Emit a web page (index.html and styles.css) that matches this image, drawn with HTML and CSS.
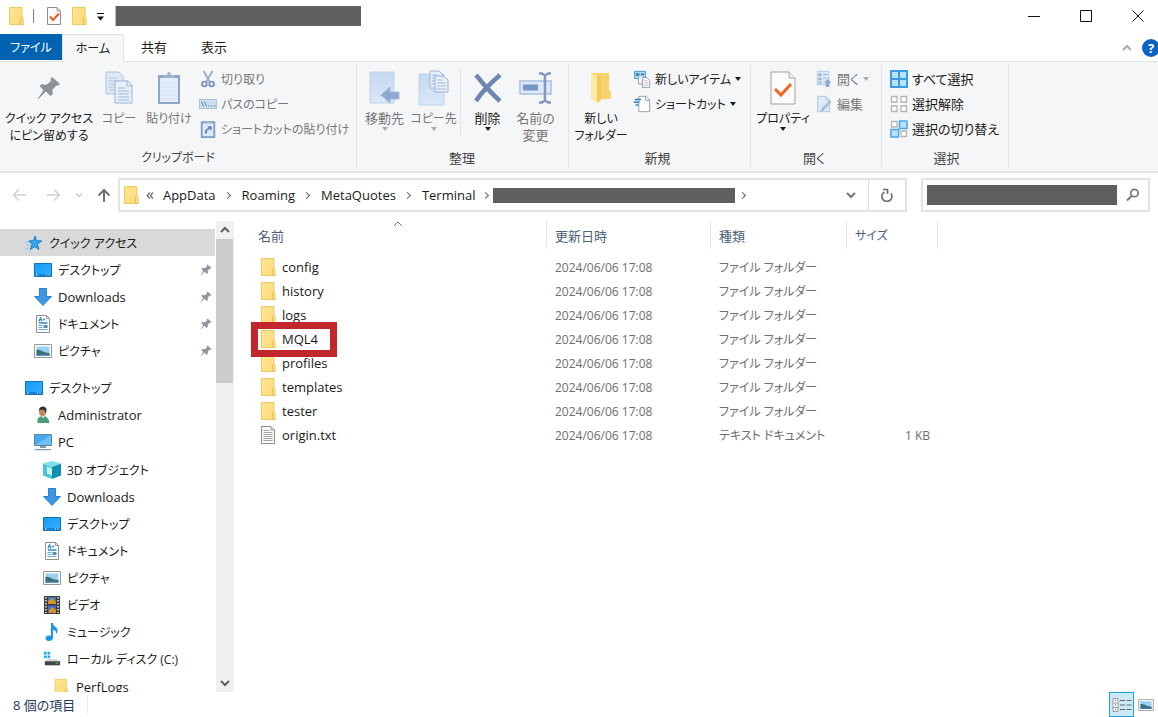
FILE: index.html
```html
<!DOCTYPE html>
<html lang="ja">
<head>
<meta charset="utf-8">
<title>エクスプローラー</title>
<link rel="stylesheet" href="styles.css">
</head>
<body>
<svg class="sprite" aria-hidden="true">
  <defs>
    <linearGradient id="g-folder" x1="0" y1="0" x2="1" y2="1"><stop offset="0" stop-color="#ffe694"/><stop offset="1" stop-color="#ffd977"/></linearGradient>
    <linearGradient id="g-desk" x1="0" y1="0" x2="1" y2="1"><stop offset="0" stop-color="#1a9bf5"/><stop offset="1" stop-color="#2fb0ff"/></linearGradient>
    <linearGradient id="g-pale" x1="0" y1="0" x2="0" y2="1"><stop offset="0" stop-color="#c5d8f0"/><stop offset="1" stop-color="#dbe8f8"/></linearGradient>
  </defs>
  <symbol id="folder" viewBox="0 0 16 20"><path d="M1.500 1.500h12.500v17H1.500z" fill="url(#g-folder)" stroke="#efcb5d"/><path d="M12.500 18.500v-6l1-1.500 1.500 1.500v6z" fill="#ffe591" stroke="#e6bd45"/></symbol>
  <symbol id="doccheck" viewBox="0 0 16 20"><path d="M1.500 1.500h9.500l3.500 3.500v13.500h-13z" fill="#fafafa" stroke="#8d8d8d"/><path d="M11 1.500v3.500h3.500" fill="none" stroke="#9b9b9b"/><path d="M4 10.500l3 3.500 6-6.500" fill="none" stroke="#f0582a" stroke-width="2"/></symbol>
  <symbol id="chev-d" viewBox="0 0 10 8"><path d="M1 2l4 4 4-4" fill="none" stroke="currentColor" stroke-width="2"/></symbol>
  <symbol id="chev-u" viewBox="0 0 10 8"><path d="M1 6l4-4 4 4" fill="none" stroke="currentColor" stroke-width="2"/></symbol>
  <symbol id="tri" viewBox="0 0 6 4"><path d="M0 0h6L3 4z" fill="currentColor"/></symbol>
  <symbol id="pin" viewBox="0 0 24 24"><path d="M15 1l8 7-2 1.500-2 .2-3.500 4 .2 4.300-2 2-5-4.500L1.500 23 1 22.500 6.500 14 2.500 10l2-1.800 5 .5L14 5l-.5-2z" fill="currentColor"/></symbol>
  <symbol id="copy" viewBox="0 0 28 34"><path d="M1 1h13l4 4v18H1z" fill="#dce8f6" stroke="#aec3df"/><path d="M4 7h8M4 10h11M4 13h11M4 16h8M4 19h8" stroke="#adc4e2"/><path d="M10 10h13l4 4v18H10z" fill="#e7f0fa" stroke="#9db5d5"/><path d="M22 10v5h5" fill="none" stroke="#9db5d5"/><path d="M13 17h7M13 20h11M13 23h11M13 26h11M13 29h11" stroke="#9cb7da"/></symbol>
  <symbol id="paste" viewBox="0 0 24 34"><path d="M1 4h22v29H1z" fill="#8fa6cb"/><path d="M3 7h18v24H3z" fill="#e2edf9"/><path d="M3 12h18M3 16h18M3 20h18M3 24h18M3 28h18" stroke="#d0dff2"/><path d="M6 7V4h4c0-4 4-4 4 0h4v3z" fill="#a3b3cd"/></symbol>
  <symbol id="cut" viewBox="0 0 16 20"><path d="M3 1l7 12M13 1L6 13" stroke="#96a8c6" stroke-width="2" fill="none"/><circle cx="4" cy="15.500" r="2.600" fill="none" stroke="#7891bc" stroke-width="2"/><circle cx="12" cy="15.500" r="2.600" fill="none" stroke="#7891bc" stroke-width="2"/></symbol>
  <symbol id="path" viewBox="0 0 18 12"><path d="M.5 1.500h17v9H.5z" fill="#cfe0f3" stroke="#a9c0df"/><path d="M2.500 3.500l2 5M5.500 3.500l2 5" stroke="#5f7ca9"/><path d="M9 8h1.500M12 8h1.500M15 8h1.500" stroke="#5f7ca9"/></symbol>
  <symbol id="pastelink" viewBox="0 0 16 20"><path d="M1 2.500h14V19H1z" fill="#dce9f8" stroke="#7f9bc6" stroke-width="2"/><path d="M5 4V1.500h6V4z" fill="#a8b9d3"/><path d="M5.500 15c0-4 1-5 4-5.500" fill="none" stroke="#5a7db5" stroke-width="2"/><path d="M7 7h5v5z" fill="#5a7db5"/></symbol>
  <symbol id="moveto" viewBox="0 0 32 34"><path d="M1 1h24v31H1z" fill="url(#g-pale)" stroke="#c3d2e8"/><path d="M12 24l9-8v5h9v7h-9v4z" fill="#8ea8d0" stroke="#a5badb"/></symbol>
  <symbol id="copyto" viewBox="0 0 32 36"><path d="M1 4h25v31H1z" fill="url(#g-pale)" stroke="#c3d2e8"/><path d="M12 1h9l4 4v13H12z" fill="#e3edf9" stroke="#a1b7d6"/><path d="M17 6h8l5 4v12H17z" fill="#e9f1fb" stroke="#96aed2"/><path d="M19 10h6M19 13h9M19 16h9M19 19h9M14 5h5M14 8h3M14 11h3M14 14h3" stroke="#9cb5d9"/></symbol>
  <symbol id="delete" viewBox="0 0 30 30"><path d="M3 2c4 5 16 19 24 26M27 2C20 8 8 20 3 28" fill="none" stroke="#6e86b0" stroke-width="4.500"/></symbol>
  <symbol id="rename" viewBox="0 0 34 32"><path d="M1 9h31v13H1z" fill="#dce8f7" stroke="#a9bfdf" stroke-width="1.500"/><path d="M4 12.500h15v6H4z" fill="#7894c3"/><path d="M20 1.500h3l3 2 3-2h3M26 3v26M20 30.500h3l3-2 3 2h3" fill="none" stroke="#8199c1" stroke-width="2.500"/></symbol>
  <symbol id="newfolder" viewBox="0 0 22 32"><path d="M1 1h18v17l2 2v7H6z" fill="#f8d36b"/><path d="M1 1l6 3v27l-6-4z" fill="#ffe9a4"/><path d="M7 4h4v24l-4 3z" fill="#f3c959"/></symbol>
  <symbol id="newitem" viewBox="0 0 18 20"><path d="M.8 1.500h12v8H.8z" fill="#a8dcf7" stroke="#4794c3"/><path d="M2 3.500h4v3H2zM8 3.500h3v2H8z" fill="#347b9f"/><path d="M5 6.500h6v9H5z" fill="#eef5fc" stroke="#8b9eae"/><path d="M9.500 8.500h5l3 3v8h-8z" fill="#fff" stroke="#8797aa"/><path d="M11 12h4M11 14.500h5M11 17h5" stroke="#d9a6a6"/></symbol>
  <symbol id="shortcut" viewBox="0 0 18 20"><path d="M5.500 1.500h8l4 4v13h-12z" fill="#fff" stroke="#919ba5"/><path d="M13 1.500v4.500h4.500" fill="none" stroke="#919ba5"/><path d="M1 5h7M0 8h6M2 11h3" stroke="#2f7cc4" stroke-width="1.700"/></symbol>
  <symbol id="props" viewBox="0 0 26 34"><path d="M1 1h18l6 6v26H1z" fill="#fbfbfb" stroke="#a2a2a2"/><path d="M19 1v6h6" fill="#eee" stroke="#aaa"/><path d="M5 18l6 6L21 13" fill="none" stroke="#f26522" stroke-width="3"/></symbol>
  <symbol id="open" viewBox="0 0 16 20"><path d="M.5 1.500h13v15H.5z" fill="#dce8f6" stroke="#b2c6e1"/><path d="M2 4h3v3H2zM2 8.500h3v3H2zM2 13h3v2H2z" fill="#94abd0"/><path d="M7 5h5M7 9h4" stroke="#94abd0"/><path d="M8 14l4-4 4 4h-2v5h-4v-5z" fill="#91a8ce"/></symbol>
  <symbol id="edit" viewBox="0 0 16 20"><path d="M1 1.500h9l4 4V18.500H1z" fill="#dfeaf8" stroke="#abc1df"/><path d="M10 1.500v4h4" fill="none" stroke="#abc1df"/><path d="M14.500 6.500l-8 8-1.500 3 3-1.500 7.500-8z" fill="#b1c6e4" stroke="#8fa9d0"/></symbol>
  <symbol id="selall" viewBox="0 0 18 18"><path d="M1 1h16v16H1zM9 1v16M1 9h16" fill="#b9e2fc" stroke="#3b9ce5" stroke-width="2"/></symbol>
  <symbol id="selnone" viewBox="0 0 18 18"><path d="M1.500 1.500h5.500v5.500h-5.500zM11 1.500h5.500v5.500h-5.500zM1.500 11h5.500v5.500h-5.500zM11 11h5.500v5.500h-5.500z" fill="#fff" stroke="#b5b5b5" stroke-width="1.300"/></symbol>
  <symbol id="selinv" viewBox="0 0 18 18"><path d="M1.500 1.500h5.500v5.500h-5.500zM11 11h5.500v5.500h-5.500z" fill="#fff" stroke="#b5b5b5" stroke-width="1.300"/><path d="M9.500 1h7.500v7.500H9.500zM1 9.500h7.500V17H1z" fill="#b9e2fc" stroke="#4aa6ea" stroke-width="1.500"/></symbol>
  <symbol id="star" viewBox="0 0 18 18"><path d="M10 2l1.600 4.700 5.200.2-4.200 3.400 1.400 5.200-4.200-2.900-4.600 2.900 1.800-5.200-3.200-3.400 4.700-.2z" fill="#35a4ec" stroke="#1f7fc9"/><path d="M.5 8h3M1.500 11h4M.5 15h3" stroke="#7dc3f1"/></symbol>
  <symbol id="desktop" viewBox="0 0 18 18"><path d="M.5 2.500h17v13H.5z" fill="url(#g-desk)" stroke="#0b73c4"/><path d="M1 14h16" stroke="#0a5da5"/><path d="M2 14h1.500M12 14h1M14.500 14h1" stroke="#fff"/></symbol>
  <symbol id="down" viewBox="0 0 18 18"><path d="M5.500.500h7v8h5l-8.500 9-8.500-9h5z" fill="#3c97e4" stroke="#2c82cf"/></symbol>
  <symbol id="doc" viewBox="0 0 18 18"><path d="M2.500.500h10l3 3v14h-13z" fill="#fff" stroke="#8f8f8f"/><path d="M12.500.500v3h3" fill="none" stroke="#999"/><path d="M5 6.500l1.500-3.500L8 6.500M9 4.500h2M5 8h8.500" fill="none" stroke="#2e8bc9" stroke-width="1.300"/><path d="M4.500 10.500h4M4.500 12.500h4M4.500 14.500h9" stroke="#69a9d6"/><path d="M9.500 10h4v3h-4z" fill="#5a8fa8"/></symbol>
  <symbol id="pic" viewBox="0 0 18 14"><path d="M.5.500h17v13H.5z" fill="#fff" stroke="#979797"/><path d="M2.500 2.500h13v9h-13z" fill="#9bd0f5"/><path d="M2.500 6c4-1 6 3 13 3v2.500h-13z" fill="#3a6f77"/><path d="M2.500 10h13v1.500h-13z" fill="#3f79a8"/></symbol>
  <symbol id="user" viewBox="0 0 16 20"><path d="M2 19c-1-5 1-7 5-8 5 0 8 3 8 8z" fill="#4a9f78"/><path d="M6 10l2 4 2-4z" fill="#f1ede3"/><ellipse cx="7.500" cy="6" rx="4" ry="5" fill="#b98a67"/><path d="M3.500 5c0-6 9-6 8.500 0l-1 3-1-3-3-1z" fill="#3b322d"/></symbol>
  <symbol id="pc" viewBox="0 0 18 18"><path d="M.5 1.500h17v11H.5z" fill="#45a9ef" stroke="#5d86a3"/><path d="M1 12L17 2v10z" fill="#6cc2f8"/><path d="M6 13h6v2H6zM1 16h16v1.300H1z" fill="#7f9cb1"/></symbol>
  <symbol id="cube" viewBox="0 0 18 18"><path d="M9 0l9 2.500-9 3.500-9-3.500z" fill="#7fe0ea"/><path d="M0 2.500L9 6v12l-9-3.500z" fill="#4cc4d6"/><path d="M18 2.500L9 6v12l9-3.500z" fill="#0f8fae"/><path d="M4 5.500l5 2v7l-5-2z" fill="#c9f1f3"/></symbol>
  <symbol id="video" viewBox="0 0 18 18"><path d="M1 0h16v18H1z" fill="#3b3b3b"/><path d="M5 1h8v7H5z" fill="#3979b8"/><path d="M5 9.500h8V17H5z" fill="#3b6ccc"/><path d="M5 5l4-3 4 4v2H5zM6 14l3-3 4 3v3H6z" fill="#d5952b"/><path d="M3 1v16M15 1v16" stroke="#eee" stroke-dasharray="1.500 1.500" stroke-width="1.500"/></symbol>
  <symbol id="music" viewBox="0 0 18 18"><path d="M8 0h2c0 4 5 4 4.500 8-.2 2-1.500 3-1.500 3 .5-4-2-4-3-4v7.500c0 4.500-7.500 4.500-7.500 1C2.500 12.500 6 12 8 13z" fill="#1b95e8"/></symbol>
  <symbol id="disk" viewBox="0 0 20 18"><path d="M1 1h3v3H1zM5 1h3v3H5zM1 5h3v3H1zM5 5h3v3H5z" fill="#19afe8"/><path d="M5 9h10l4 3H2z" fill="#d4d4d4"/><path d="M2 11.500h17V16H2z" fill="#404449"/><path d="M14 13.500h3" stroke="#62dc72"/></symbol>
  <symbol id="text" viewBox="0 0 16 20"><path d="M1.500 1.500h9.500l3.500 3.500v13.500h-13z" fill="#fafafa" stroke="#8f8f8f"/><path d="M11 1.500v3.500h3.500" fill="none" stroke="#999"/><path d="M3.500 5.500h6M3.500 7.500h9M3.500 9.500h9M3.500 11.500h9M3.500 13.500h9M3.500 15.500h9" stroke="#a5a5a5"/></symbol>
  <symbol id="details" viewBox="0 0 20 14"><path d="M1 .5h5v13H1zM1 5h5M1 9.500h5" fill="#fff" stroke="#999"/><path d="M3 2.500h1M3 7h1" stroke="#456"/><path d="M3 11.500h1" stroke="#e22"/><path d="M8 2.500h5M14.500 2.500h5M8 7h5M14.500 7h5M8 11.500h5M14.500 11.500h5" stroke="#666"/></symbol>
</svg>

<div class="window">
  <header class="titlebar">
    <svg class="i16"><use href="#folder"/></svg>
    <span class="tsep"></span>
    <button class="plain" aria-label="プロパティ"><svg class="i16"><use href="#doccheck"/></svg></button>
    <button class="plain" aria-label="新しいフォルダー"><svg class="i16"><use href="#folder"/></svg></button>
    <button class="plain custom" aria-label="カスタマイズ"><svg width="9" height="8" viewBox="0 0 9 8"><path d="M1 .5h7" stroke="#111"/><path d="M1 3.500h7L4.500 7.500z" fill="#111"/></svg></button>
    <span class="title-mask"></span>
    <div class="winbtns">
      <button class="plain" aria-label="最小化"><svg width="12" height="12" viewBox="0 0 12 12"><path d="M0 6.500h12" stroke="#111"/></svg></button>
      <button class="plain" aria-label="最大化"><svg width="12" height="12" viewBox="0 0 12 12"><path d="M.5.500h11v11H.5z" fill="none" stroke="#111"/></svg></button>
      <button class="plain" aria-label="閉じる"><svg width="12" height="12" viewBox="0 0 12 12"><path d="M.5.500l11 11M11.500.500l-11 11" stroke="#111"/></svg></button>
    </div>
  </header>

  <nav class="tabs">
    <button class="tab file kana">ファイル</button>
    <button class="tab active kana">ホーム</button>
    <button class="tab">共有</button>
    <button class="tab">表示</button>
    <div class="tab-end">
      <button class="plain collapse" aria-label="リボンの最小化"><svg width="10" height="8"><use href="#chev-u"/></svg></button>
      <button class="help" aria-label="ヘルプ">?</button>
    </div>
  </nav>

  <section class="ribbon">
    <div class="group g-clip">
      <div class="tools">
        <button class="big b-pin kana"><span class="ico pin"><svg width="24" height="24"><use href="#pin"/></svg></span>クイック アクセス<br>にピン留めする</button>
        <button class="big b-copy dim kana"><span class="ico"><svg width="28" height="34"><use href="#copy"/></svg></span>コピー</button>
        <button class="big b-paste dim kana"><span class="ico"><svg width="24" height="34"><use href="#paste"/></svg></span>貼り付け</button>
        <div class="smalls">
          <button class="small dim kana"><svg class="i18"><use href="#cut"/></svg>切り取り</button>
          <button class="small dim kana"><svg class="i18"><use href="#path"/></svg>パスのコピー</button>
          <button class="small dim kana"><svg class="i18"><use href="#pastelink"/></svg>ショートカットの貼り付け</button>
        </div>
      </div>
      <div class="label kana">クリップボード</div>
    </div>
    <div class="group g-org">
      <div class="tools">
        <button class="big b-org dim"><span class="ico"><svg width="32" height="34"><use href="#moveto"/></svg></span>移動先<svg class="tri"><use href="#tri"/></svg></button>
        <button class="big b-org dim kana"><span class="ico"><svg width="32" height="36"><use href="#copyto"/></svg></span>コピー先<svg class="tri"><use href="#tri"/></svg></button>
        <span class="rsep"></span>
        <button class="big b-org"><span class="ico"><svg width="30" height="30"><use href="#delete"/></svg></span>削除<svg class="tri"><use href="#tri"/></svg></button>
        <button class="big b-ren dim"><span class="ico"><svg width="34" height="32"><use href="#rename"/></svg></span>名前の<br>変更</button>
      </div>
      <div class="label">整理</div>
    </div>
    <div class="group g-new">
      <div class="tools">
        <button class="big b-new kana"><span class="ico"><svg width="22" height="32"><use href="#newfolder"/></svg></span>新しい<br>フォルダー</button>
        <div class="smalls">
          <button class="small kana"><svg class="i18"><use href="#newitem"/></svg>新しいアイテム<svg class="tri"><use href="#tri"/></svg></button>
          <button class="small kana"><svg class="i18"><use href="#shortcut"/></svg>ショートカット<svg class="tri"><use href="#tri"/></svg></button>
        </div>
      </div>
      <div class="label">新規</div>
    </div>
    <div class="group g-open">
      <div class="tools">
        <button class="big b-new kana"><span class="ico"><svg width="26" height="34"><use href="#props"/></svg></span>プロパティ<svg class="tri"><use href="#tri"/></svg></button>
        <div class="smalls">
          <button class="small dim"><svg class="i18"><use href="#open"/></svg>開く<svg class="tri"><use href="#tri"/></svg></button>
          <button class="small dim"><svg class="i18"><use href="#edit"/></svg>編集</button>
        </div>
      </div>
      <div class="label">開く</div>
    </div>
    <div class="group g-sel">
      <div class="tools">
        <div class="smalls">
          <button class="small"><svg class="i18"><use href="#selall"/></svg>すべて選択</button>
          <button class="small"><svg class="i18"><use href="#selnone"/></svg>選択解除</button>
          <button class="small"><svg class="i18"><use href="#selinv"/></svg>選択の切り替え</button>
        </div>
      </div>
      <div class="label">選択</div>
    </div>
  </section>

  <div class="navbar">
    <div class="history">
      <button class="plain" aria-label="戻る"><svg width="14" height="14" viewBox="0 0 14 14"><path d="M14 7H1.500M7 1.500L1.500 7 7 12.500" fill="none" stroke="#d0d0d0" stroke-width="1.500"/></svg></button>
      <button class="plain" aria-label="進む"><svg width="14" height="14" viewBox="0 0 14 14"><path d="M0 7h12.500M7 1.500L12.500 7 7 12.500" fill="none" stroke="#d0d0d0" stroke-width="1.500"/></svg></button>
      <button class="plain recent" aria-label="最近の場所"><svg width="8" height="6"><use href="#chev-d"/></svg></button>
      <button class="plain" aria-label="上へ"><svg width="14" height="14" viewBox="0 0 14 14"><path d="M7 14V2M1.500 7.500L7 2l5.500 5.500" fill="none" stroke="#707070" stroke-width="2"/></svg></button>
    </div>
    <div class="address">
      <svg class="i16"><use href="#folder"/></svg>
      <span class="laquo">«</span>
      <button class="crumb">AppData</button><span class="sep"></span>
      <button class="crumb">Roaming</button><span class="sep"></span>
      <button class="crumb">MetaQuotes</button><span class="sep"></span>
      <button class="crumb">Terminal</button><span class="sep tight"></span>
      <span class="path-mask"></span><span class="sep tight"></span>
      <button class="plain drop" aria-label="履歴"><svg width="10" height="8"><use href="#chev-d"/></svg></button>
      <button class="plain reload" aria-label="更新"><svg width="14" height="14" viewBox="0 0 14 14"><path d="M4.500 4A5 5 0 1 0 11 5.500M3 1.500h4.500V6" fill="none" stroke="#707070" stroke-width="1.700"/></svg></button>
    </div>
    <div class="search">
      <input type="search" aria-label="検索">
      <button class="plain" aria-label="検索を実行"><svg width="14" height="14" viewBox="0 0 14 14"><circle cx="8.500" cy="5" r="3.700" fill="none" stroke="#777" stroke-width="1.700"/><path d="M6 7.500L1 12.500" stroke="#777" stroke-width="2"/></svg></button>
    </div>
  </div>

  <main class="content">
    <aside class="side">
      <ul class="tree">
        <li><a href="#" class="node l0 selected kana"><svg class="i18"><use href="#star"/></svg>クイック アクセス</a>
          <ul>
            <li><a href="#" class="node l1 kana"><svg class="i18"><use href="#desktop"/></svg>デスクトップ<svg class="pinned"><use href="#pin"/></svg></a></li>
            <li><a href="#" class="node l1"><svg class="i18"><use href="#down"/></svg>Downloads<svg class="pinned"><use href="#pin"/></svg></a></li>
            <li><a href="#" class="node l1 kana"><svg class="i18"><use href="#doc"/></svg>ドキュメント<svg class="pinned"><use href="#pin"/></svg></a></li>
            <li><a href="#" class="node l1 kana"><svg class="i18"><use href="#pic"/></svg>ピクチャ<svg class="pinned"><use href="#pin"/></svg></a></li>
          </ul>
        </li>
        <li class="root"><a href="#" class="node l0 kana"><svg class="i18"><use href="#desktop"/></svg>デスクトップ</a>
          <ul>
            <li><a href="#" class="node l1"><svg class="i18"><use href="#user"/></svg>Administrator</a></li>
            <li><a href="#" class="node l1"><svg class="i18"><use href="#pc"/></svg>PC</a>
              <ul>
                <li><a href="#" class="node l2 kana"><svg class="i18"><use href="#cube"/></svg>3D オブジェクト</a></li>
                <li><a href="#" class="node l2"><svg class="i18"><use href="#down"/></svg>Downloads</a></li>
                <li><a href="#" class="node l2 kana"><svg class="i18"><use href="#desktop"/></svg>デスクトップ</a></li>
                <li><a href="#" class="node l2 kana"><svg class="i18"><use href="#doc"/></svg>ドキュメント</a></li>
                <li><a href="#" class="node l2 kana"><svg class="i18"><use href="#pic"/></svg>ピクチャ</a></li>
                <li><a href="#" class="node l2 kana"><svg class="i18"><use href="#video"/></svg>ビデオ</a></li>
                <li><a href="#" class="node l2 kana"><svg class="i18"><use href="#music"/></svg>ミュージック</a></li>
                <li><a href="#" class="node l2 kana"><svg class="i18"><use href="#disk"/></svg>ローカル ディスク (C:)</a>
                  <ul>
                    <li><a href="#" class="node l3"><svg class="i18"><use href="#folder"/></svg>PerfLogs</a></li>
                  </ul>
                </li>
              </ul>
            </li>
          </ul>
        </li>
      </ul>
      <div class="scroll">
        <button class="plain" aria-label="上へスクロール"><svg width="10" height="8"><use href="#chev-u"/></svg></button>
        <div class="track"><div class="thumb"></div></div>
        <button class="plain" aria-label="下へスクロール"><svg width="10" height="8"><use href="#chev-d"/></svg></button>
      </div>
    </aside>
    <section class="files">
      <table>
        <thead>
          <tr><th class="c-name">名前<svg class="sort" width="10" height="6" viewBox="0 0 10 6"><path d="M1 5l4-4 4 4" fill="none" stroke="#777"/></svg></th><th class="c-date">更新日時</th><th class="c-type">種類</th><th class="c-size kana">サイズ</th></tr>
        </thead>
        <tbody>
          <tr><td><div class="name"><svg class="i16"><use href="#folder"/></svg>config</div></td><td>2024/06/06 17:08</td><td>ファイル フォルダー</td><td></td></tr>
          <tr><td><div class="name"><svg class="i16"><use href="#folder"/></svg>history</div></td><td>2024/06/06 17:08</td><td>ファイル フォルダー</td><td></td></tr>
          <tr><td><div class="name"><svg class="i16"><use href="#folder"/></svg>logs</div></td><td>2024/06/06 17:08</td><td>ファイル フォルダー</td><td></td></tr>
          <tr><td><div class="name"><svg class="i16"><use href="#folder"/></svg>MQL4<span class="marker"></span></div></td><td>2024/06/06 17:08</td><td>ファイル フォルダー</td><td></td></tr>
          <tr><td><div class="name"><svg class="i16"><use href="#folder"/></svg>profiles</div></td><td>2024/06/06 17:08</td><td>ファイル フォルダー</td><td></td></tr>
          <tr><td><div class="name"><svg class="i16"><use href="#folder"/></svg>templates</div></td><td>2024/06/06 17:08</td><td>ファイル フォルダー</td><td></td></tr>
          <tr><td><div class="name"><svg class="i16"><use href="#folder"/></svg>tester</div></td><td>2024/06/06 17:08</td><td>ファイル フォルダー</td><td></td></tr>
          <tr><td><div class="name"><svg class="i16"><use href="#text"/></svg>origin.txt</div></td><td>2024/06/06 17:08</td><td>テキスト ドキュメント</td><td class="size">1 KB</td></tr>
        </tbody>
      </table>
    </section>
  </main>

  <footer class="status">
    <span class="count">8 個の項目</span>
    <div class="views">
      <button class="view on" aria-label="詳細"><svg width="20" height="14"><use href="#details"/></svg></button>
      <button class="view" aria-label="大アイコン"><svg width="16" height="12"><use href="#pic"/></svg></button>
    </div>
  </footer>
</div>
</body>
</html>
```
FILE: styles.css
```css
* { box-sizing: border-box; }
body, ul { margin: 0; padding: 0; }
body, button, input {
  font-family: "Open Sans", "Noto Sans CJK JP", sans-serif;
  font-size: 13px;
  font-feature-settings: "palt";
}
body { background: #fff; color: #1a1a1a; }
ul { list-style: none; }
svg { display: block; flex: none; }
button { color: inherit; white-space: nowrap; }
.kana { font-size: 12px; }
.sprite { position: absolute; width: 0; height: 0; }
.i16 { width: 16px; height: 20px; }
.i18 { width: 18px; height: 18px; }
.tri { width: 6px; height: 4px; }
.plain { display: flex; align-items: center; justify-content: center; padding: 0; border: 0; background: none; }

.window { display: flex; flex-direction: column; height: 100vh; overflow: hidden; }

.titlebar { display: flex; align-items: center; height: 34px; padding: 0 0 2px 8px; flex: none; }
.tsep { width: 1px; height: 14px; margin: 0 12px 0 9px; background: #888; }
.titlebar > .plain { margin-right: 9px; }
.titlebar > .plain.custom { margin: 2px 10px 0 0; }
.title-mask { width: 246px; height: 20px; background: #5f5f5f; border-left: 1px solid #bbb; }
.winbtns { display: flex; gap: 12px; margin-left: auto; }
.winbtns .plain { width: 40px; height: 32px; }

.tabs { display: flex; flex: none; height: 28px; border-bottom: 1px solid #e2e3e4; }
.tab { width: 60px; padding: 0 0 2px; border: 0; background: none; }
.tab.file { width: 62px; height: 26px; padding: 0; background: #0063b1; color: #fff; }
.tab.active { width: 62px; height: 28px; background: #f5f6f7; border: 1px solid #e2e3e4; border-bottom: 0; }
.tab-end { display: flex; align-items: center; gap: 10px; margin-left: auto; overflow: hidden; }
.collapse { color: #aaa; }
.help { width: 18px; height: 18px; margin-right: -2px; padding: 0; border: 0; border-radius: 50%; background: #0a63c4; color: #fff; font-weight: 700; line-height: 18px; }

.ribbon { display: flex; flex: none; height: 111px; background: #f5f6f7; border-bottom: 2px solid #e4e5e6; }
.group { display: flex; flex-direction: column; margin: 3px 0 4px; border-right: 1px solid #e1e2e3; flex: none; }
.g-clip { width: 357px; }
.g-org { width: 212px; padding-left: 3px; }
.g-new { width: 182px; }
.g-open { width: 131px; }
.g-sel { width: 127px; padding-left: 7px; }
.tools { display: flex; height: 86px; }
.label { line-height: 18px; text-align: center; color: #444; }
.g-org .label, .g-new .label, .g-open .label, .g-sel .label { padding-right: 4px; }
.big { display: flex; flex-direction: column; align-items: center; padding: 5px 0 0; border: 0; background: none; line-height: 17px; text-align: center; }
.ico { display: flex; align-items: center; justify-content: center; height: 36px; margin-bottom: 4px; }
.ico.pin { color: #8b9398; }
.dim { color: #777; }
.dim .tri { color: #aaa; }
.b-pin { width: 98px; }
.b-copy { width: 42px; }
.b-paste { width: 58px; }
.b-org { width: 49px; }
.b-ren { width: 47px; }
.b-new { width: 64px; }
.rsep { width: 1px; height: 68px; margin: 4px 2px 0; background: #e1e2e3; }
.smalls { display: flex; flex-direction: column; padding: 1px 0 0 1px; }
.small { display: flex; align-items: center; gap: 4px; height: 25px; padding: 0; border: 0; background: none; }
.g-new .smalls, .g-open .smalls { padding-left: 0; }

.navbar { display: flex; flex: none; align-items: center; height: 46px; padding: 0 8px 2px 12px; }
.history { display: flex; align-items: center; width: 106px; gap: 21px; color: #ccc; }
.history .recent { margin: 0 -7px; }
.address { display: flex; flex: 1; align-items: center; height: 34px; border: 2px solid #e3e3e3; padding-left: 3px; }
.laquo { margin: 0 6px 2px 7px; font-size: 16px; color: #555; }
.crumb { padding: 0 3px; border: 0; background: none; }
.sep { width: 5px; height: 5px; margin: 0 9px 0 6px; border: solid #666; border-width: 1px 1px 0 0; transform: rotate(45deg); }
.sep.tight { margin: 0 5px; }
.path-mask { width: 242px; height: 15px; background: #5f5f5f; }
.drop { width: 34px; height: 30px; margin-left: auto; color: #777; }
.reload { width: 37px; height: 30px; border-left: 1px solid #dedede; }
.search { display: flex; align-items: center; width: 229px; height: 34px; margin-left: 14px; padding-left: 4px; border: 2px solid #e3e3e3; }
.search input { flex: 1; min-width: 0; height: 20px; padding: 0; border: 0; background: #5f5f5f; }
.search .plain { width: 31px; height: 30px; }

.content { display: flex; flex: 1; min-height: 0; }
.side { display: flex; width: 234px; padding-top: 2px; flex: none; }
.tree { width: 215px; padding-top: 8px; overflow: hidden; }
.root { margin-top: 10px; }
.root ul ul { margin-top: 1px; }
.node { display: flex; align-items: center; gap: 6px; height: 27px; padding-right: 3px; color: inherit; text-decoration: none; white-space: nowrap; }
.l0 { padding-left: 25px; }
.l1 { padding-left: 34px; }
.l2 { padding-left: 43px; }
.l3 { padding-left: 52px; }
.selected { background: #d9d9d9; }
.pinned { width: 12px; height: 12px; margin-left: auto; color: #8e979f; }
.scroll { display: flex; flex-direction: column; width: 18px; margin-left: 1px; background: #f0f0f0; color: #606060; }
.scroll .plain { height: 18px; }
.track { flex: 1; }
.thumb { width: 17px; height: 144px; background: #cdcdcd; }

.files { flex: 1; padding-left: 16px; overflow: hidden; }
table { border-collapse: collapse; table-layout: fixed; width: 688px; }
th { position: relative; height: 36px; padding: 0 0 4px 8px; text-align: left; font-weight: 400; color: #4c607a; background: linear-gradient(#e5e5e5, #e5e5e5) right 2px / 1px 28px no-repeat; }
.c-name { width: 297px; }
.c-date { width: 164px; }
.c-type { width: 136px; }
.c-size { width: 91px; }
.sort { position: absolute; top: 2px; left: 48%; }
td { height: 24px; padding: 0 8px; color: #6d6d6d; font-size: 12px; white-space: nowrap; }
.name { position: relative; display: flex; align-items: center; gap: 6px; padding-left: 2px; color: #1a1a1a; font-size: 13px; }
.size { text-align: right; }
.marker { position: absolute; left: -7px; top: -7px; width: 86px; height: 35px; border: 7px solid #c1272d; z-index: 1; }

.status { display: flex; flex: none; align-items: center; height: 25px; padding: 0 1px 0 13px; color: #1e395b; }
.count { padding-right: 12px; border-right: 1px solid #eee; }
.views { display: flex; margin-left: auto; }
.view { display: flex; align-items: center; justify-content: center; width: 23px; height: 25px; padding: 0; border: 0; background: none; }
.view.on { width: 25px; border: 1px solid #26a0da; background: #cbe8f6; }
```
